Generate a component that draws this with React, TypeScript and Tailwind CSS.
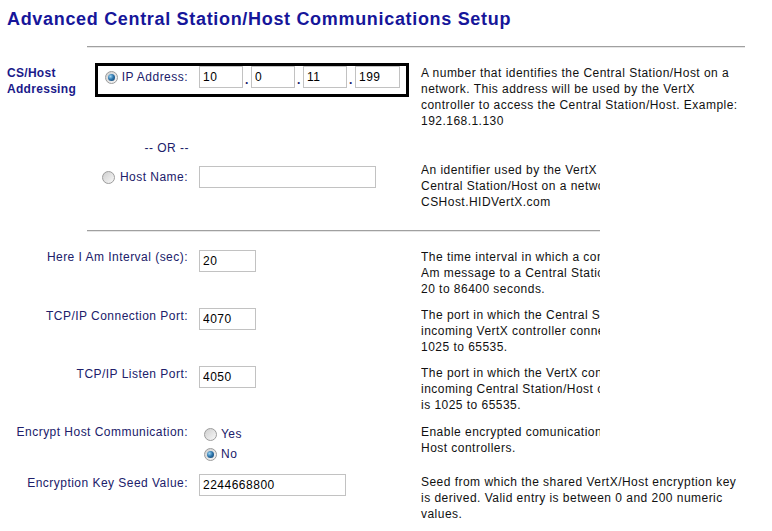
import React from "react";

function Radio({ checked = false }: { checked?: boolean }) {
  return (
    <span className="inline-flex w-[13px] h-[13px] shrink-0 items-center justify-center rounded-full border border-[#9c9c9c] bg-[linear-gradient(135deg,#cfcfcf,#f8f8f8)]">
      {checked && (
        <span className="w-[7px] h-[7px] rounded-full bg-[radial-gradient(circle_at_35%_35%,#9fd6f5_0%,#2f77ad_45%,#0c3560_100%)]" />
      )}
    </span>
  );
}

function Field({ value, w }: { value: string; w: string }) {
  return (
    <input
      readOnly
      defaultValue={value}
      className={`${w} h-[22px] border border-[#c2c2c2] bg-white px-[3px] text-[12px] tracking-[0.5px] text-black outline-none font-['Liberation_Sans',Arial,sans-serif]`}
    />
  );
}

function Lines({ lines }: { lines: string[] }) {
  return (
    <div className="whitespace-nowrap text-[#111]">
      {lines.map((l, i) => (
        <div key={i}>{l}</div>
      ))}
    </div>
  );
}

function Clipped({ lines }: { lines: string[] }) {
  return (
    <div className="w-[179px] overflow-hidden">
      <Lines lines={lines} />
    </div>
  );
}

export default function App() {
  const lbl = "text-[#20206a]";
  return (
    <div className="w-[772px] h-[531px] overflow-hidden bg-white font-['Liberation_Sans',Arial,sans-serif] text-[12px] leading-[16px] tracking-[0.47px]">
      <h1 className="pt-[8px] pl-[7px] text-[18px] leading-[22px] font-bold tracking-[0.68px] text-[#16169a]">
        Advanced Central Station/Host Communications Setup
      </h1>
      <div className="mt-[16px] ml-[87px] w-[658px] border-t border-t-[#a0a0a0] border-b border-b-[#e6e6e6]" />

      {/* CS/Host Addressing */}
      <div className="mt-[15px] flex items-start">
        <div className="w-[95px] pl-[7px] pt-[2px] font-bold tracking-[0.3px] text-[#1a1a8a]">
          CS/Host
          <br />
          Addressing
        </div>
        <div className="w-[314px] border-[3px] border-black flex items-end pb-[6px]">
          <div className={`w-[101px] h-[22px] flex items-center justify-end gap-[4px] pr-[11px] ${lbl}`}>
            <Radio checked />
            <span>IP Address:</span>
          </div>
          <Field value="10" w="w-[44px]" />
          <span className={`w-[8px] text-center font-bold ${lbl}`}>.</span>
          <Field value="0" w="w-[44px]" />
          <span className={`w-[8px] text-center font-bold ${lbl}`}>.</span>
          <Field value="11" w="w-[44px]" />
          <span className={`w-[8px] text-center font-bold ${lbl}`}>.</span>
          <Field value="199" w="w-[45px]" />
        </div>
        <div className="ml-[12px] mt-[2px]">
          <Lines
            lines={[
              "A number that identifies the Central Station/Host on a",
              "network. This address will be used by the VertX",
              "controller to access the Central Station/Host. Example:",
              "192.168.1.130",
            ]}
          />
        </div>
      </div>

      {/* OR */}
      <div className={`mt-[11px] w-[189px] text-right ${lbl}`}>-- OR --</div>

      {/* Host Name */}
      <div className="mt-[6px] flex items-start">
        <div className={`w-[188px] mt-[4px] h-[22px] flex items-center justify-end gap-[5px] ${lbl}`}>
          <Radio />
          <span>Host Name:</span>
        </div>
        <div className="ml-[11px] mt-[4px] w-[222px]">
          <Field value="" w="w-[177px]" />
        </div>
        <Clipped
          lines={[
            "An identifier used by the VertX controller to identify the",
            "Central Station/Host on a network. Example:",
            "CSHost.HIDVertX.com",
          ]}
        />
      </div>

      <div className="mt-[20px] ml-[87px] w-[513px] border-t border-t-[#a0a0a0] border-b border-b-[#e6e6e6]" />

      {/* Here I Am */}
      <div className="mt-[17px] flex items-start">
        <div className={`w-[188px] text-right ${lbl}`}>Here I Am Interval (sec):</div>
        <div className="ml-[11px] mt-[1px] w-[222px]">
          <Field value="20" w="w-[57px]" />
        </div>
        <Clipped
          lines={[
            "The time interval in which a controller sends a Here I",
            "Am message to a Central Station/Host. Valid entry is",
            "20 to 86400 seconds.",
          ]}
        />
      </div>

      {/* TCP/IP Connection Port */}
      <div className="mt-[10px] flex items-start">
        <div className={`w-[188px] mt-[1px] text-right ${lbl}`}>TCP/IP Connection Port:</div>
        <div className="ml-[11px] mt-[1px] w-[222px]">
          <Field value="4070" w="w-[57px]" />
        </div>
        <Clipped
          lines={[
            "The port in which the Central Station/Host listens for",
            "incoming VertX controller connections. Valid entry is",
            "1025 to 65535.",
          ]}
        />
      </div>

      {/* TCP/IP Listen Port */}
      <div className="mt-[10px] flex items-start">
        <div className={`w-[188px] mt-[1px] text-right ${lbl}`}>TCP/IP Listen Port:</div>
        <div className="ml-[11px] mt-[1px] w-[222px]">
          <Field value="4050" w="w-[57px]" />
        </div>
        <Clipped
          lines={[
            "The port in which the VertX controller listens for",
            "incoming Central Station/Host connections. Valid entry",
            "is 1025 to 65535.",
          ]}
        />
      </div>

      {/* Encrypt Host Communication */}
      <div className="mt-[11px] flex items-start">
        <div className={`w-[188px] text-right ${lbl}`}>Encrypt Host Communication:</div>
        <div className={`ml-[11px] w-[222px] pl-[5px] ${lbl}`}>
          <div className="h-[20px] flex items-center gap-[4px]">
            <Radio />
            <span>Yes</span>
          </div>
          <div className="h-[20px] flex items-center gap-[4px]">
            <Radio checked />
            <span>No</span>
          </div>
        </div>
        <Clipped lines={["Enable encrypted comunication between VertX and", "Host controllers."]} />
      </div>

      {/* Encryption Key Seed Value */}
      <div className="mt-[10px] flex items-start">
        <div className={`w-[188px] mt-[1px] text-right ${lbl}`}>Encryption Key Seed Value:</div>
        <div className="ml-[11px] w-[222px]">
          <Field value="2244668800" w="w-[147px]" />
        </div>
        <Lines
          lines={[
            "Seed from which the shared VertX/Host encryption key",
            "is derived. Valid entry is between 0 and 200 numeric",
            "values.",
          ]}
        />
      </div>
    </div>
  );
}
